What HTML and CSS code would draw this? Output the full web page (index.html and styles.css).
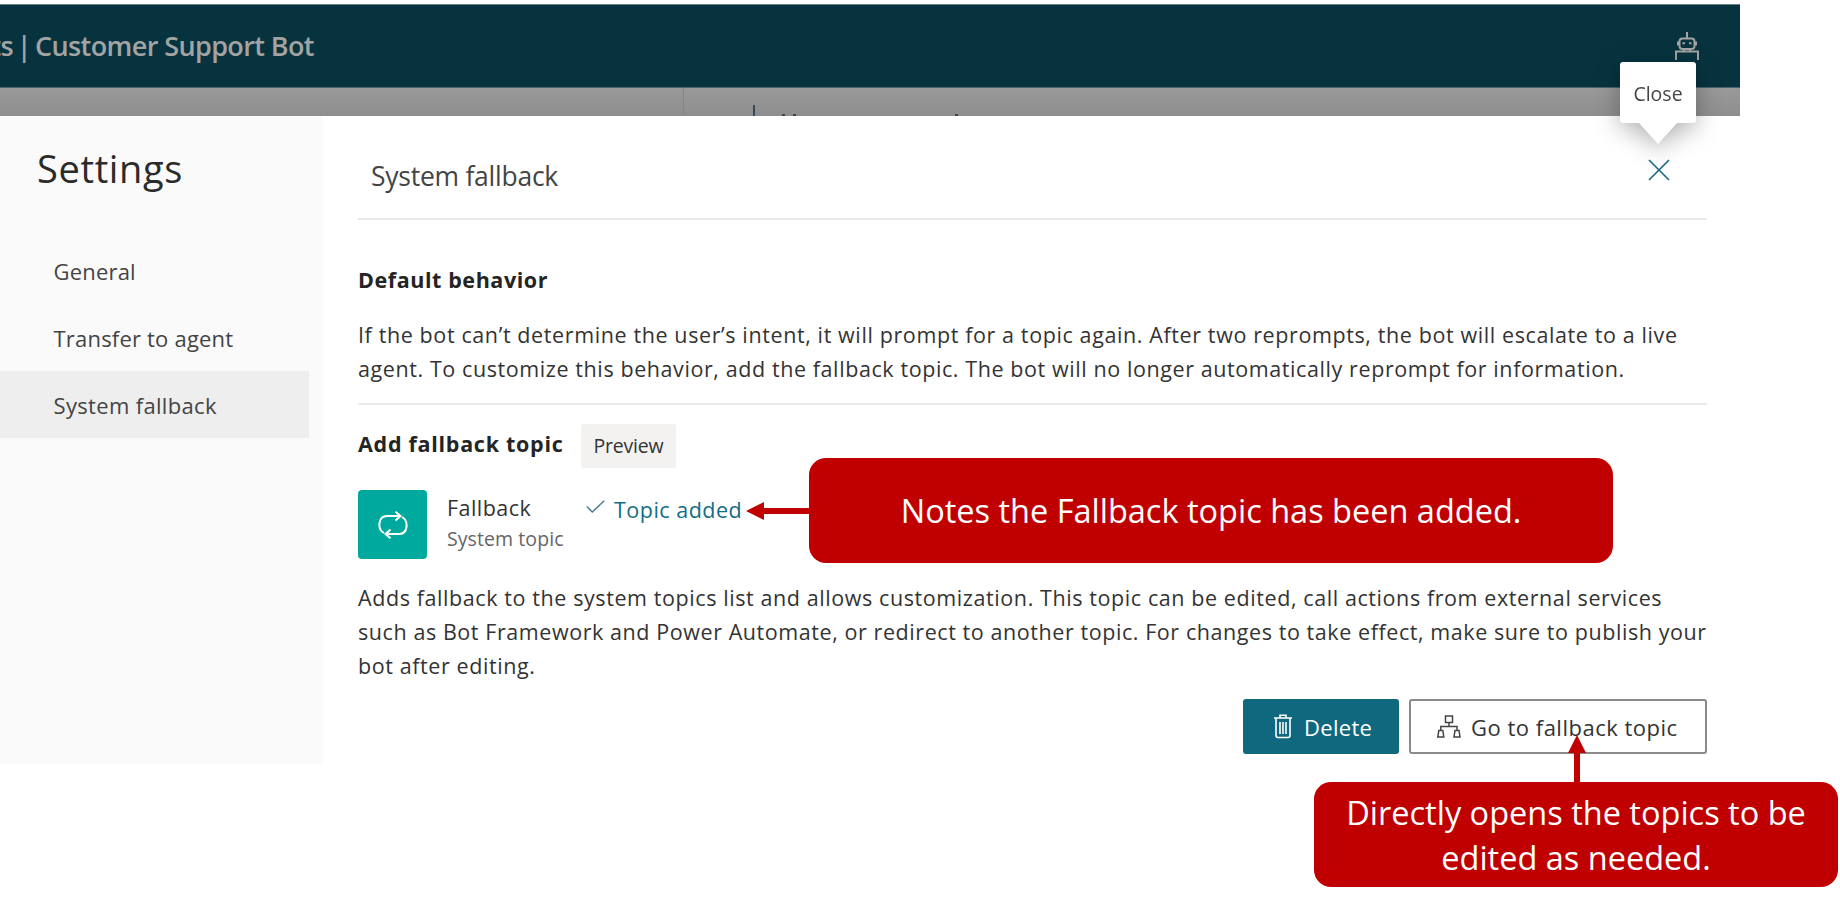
FILE: index.html
```
<!DOCTYPE html>
<html lang="en">
<head>
<meta charset="utf-8">
<title>Settings</title>
<link rel="stylesheet" href="styles.css">
</head>
<body>
<div class="page">
  <header class="topbar">
    <h1 class="app-title"><span class="cut"><span class="t">ts</span></span><span class="bar t">|</span><span class="t name">Customer Support Bot</span></h1>
    <svg class="bot" viewBox="0 0 24 28"><path d="M12 0v6M1 28v-8.500h22V28M9 19.500v-2M15 19.500v-2"/><rect x="4.500" y="6.500" width="15" height="10.500" rx="3"/><path d="M3 9.500v4M21 9.500v4"/><path d="M7.500 11.300h2.500M14 11.300h2.500"/></svg>
  </header>
  <div class="backdrop"><i class="divider"></i><i class="caret"></i><i class="speck a"></i><i class="speck b"></i><i class="speck c"></i></div>
  <div class="panel">
    <nav class="sidebar">
      <h2 class="side-title"><span class="t">Settings</span></h2>
      <a class="item"><span class="t g1">General</span></a>
      <a class="item"><span class="t g2">Transfer to agent</span></a>
      <a class="item active"><span class="t g3">System fallback</span></a>
    </nav>
    <main class="content">
      <div class="head">
        <h3 class="head-title"><span class="t">System fallback</span></h3>
        <svg class="close" viewBox="0 0 22 22"><path d="M1 1l20 20M21 1L1 21"/></svg>
      </div>
      <h4 class="section"><span class="t s1">Default behavior</span></h4>
      <p class="para"><span class="t p1">If the bot can’t determine the user’s intent, it will prompt for a topic again. After two reprompts, the bot will escalate to a live</span><span class="t p2">agent. To customize this behavior, add the fallback topic. The bot will no longer automatically reprompt for information.</span></p>
      <div class="add-row">
        <h4 class="section add"><span class="t s2">Add fallback topic</span></h4>
        <span class="badge"><span class="t">Preview</span></span>
      </div>
      <div class="topic">
        <div class="tile"><svg viewBox="0 0 30 28"><path d="M6 22C-1 18 0 5 9 5h12M17.500 .8L22.500 5l-5 4.500M24 6c7 4 6 17-3 17H8M12.500 18.500L7.500 23l5 4.300"/></svg></div>
        <div class="names"><span class="t n1">Fallback</span><span class="t n2">System topic</span></div>
        <svg class="check" viewBox="0 0 19 13"><path d="M.8 6.500l5.500 5.500L18.200.8"/></svg>
        <span class="added"><span class="t">Topic added</span></span>
      </div>
      <p class="para second"><span class="t p3">Adds fallback to the system topics list and allows customization. This topic can be edited, call actions from external services</span><span class="t p4">such as Bot Framework and Power Automate, or redirect to another topic. For changes to take effect, make sure to publish your</span><span class="t p5">bot after editing.</span></p>
      <div class="actions">
        <button class="btn primary"><svg class="trash" viewBox="0 0 20 25"><path d="M1 4h18M7 4V1.300h6V4M3 4v17.500q0 2 2 2h10q2 0 2-2V4M7 8v12M10 8v12M13 8v12"/></svg><span class="t b1">Delete</span></button>
        <button class="btn"><svg class="tree" viewBox="0 0 24 23"><path d="M8.500 1h7v6.500h-7zM1.800 15.500h4l1 6.500h-6zM18 15.500h4l1 6.500h-6zM12 7.500v4M3.800 15.500v-4H20v4"/></svg><span class="t b2">Go to fallback topic</span></button>
      </div>
    </main>
  </div>
  <div class="tooltip"><span class="t">Close</span></div>
  <div class="callout one"><span class="t c1">Notes the Fallback topic has been added.</span></div>
  <svg class="arrow left" viewBox="0 0 64 18"><path d="M0 9L18 0v6h46v6H18v6z"/></svg>
  <div class="callout two"><span class="t c2">Directly opens the topics to be</span><span class="t c3">edited as needed.</span></div>
  <svg class="arrow up" viewBox="0 0 18 48"><path d="M9 0l9 18h-6v30H6V18H0z"/></svg>
</div>
</body>
</html>
```
FILE: styles.css
```
* { box-sizing: border-box; }
body { margin: 0; background: #fff; font-family: "Open Sans", "Noto Sans", sans-serif; color: #333; }
h1, h2, h3, h4, p { margin: 0; font-weight: 400; }
svg { display: block; fill: none; }
.t { white-space: nowrap; }
.page { position: relative; width: 1840px; height: 903px; overflow: hidden; padding-top: 4px; }

.topbar { width: 1740px; height: 84px; background: #07333f; border-top: 1px solid #6b7f87; border-bottom: 1px solid #48636c; display: flex; justify-content: space-between; padding-right: 41px; }
.app-title { display: flex; font-size: 27px; line-height: 82px; font-weight: 650; color: #a3a3a3; letter-spacing: -.6px; }
.cut { width: 13px; overflow: hidden; display: flex; justify-content: flex-end; }
.bar { width: 22px; text-align: center; }
.bot { width: 24px; height: 28px; margin-top: 27px; stroke: #a3a3a3; stroke-width: 2; }

.backdrop { width: 1740px; height: 28px; background: linear-gradient(#999, #8e8e8e); position: relative; }
.backdrop i { position: absolute; bottom: 0; background: #444; }
.backdrop .divider { left: 683px; width: 1px; height: 28px; background: #858585; }
.backdrop .caret { left: 753px; width: 2px; height: 11px; background: #34495c; }
.backdrop .speck { width: 3px; height: 2px; }
.a { left: 782px; } .b { left: 793px; } .c { left: 955px; }

.panel { display: flex; height: 648px; width: 1740px; }
.sidebar { width: 323px; background: #fafafa; }
.side-title { font-size: 38px; letter-spacing: .65px; line-height: 60px; padding: 22px 0 0 37px; height: 121px; color: #2b2b2b; }
.item { display: block; height: 67px; width: 309px; padding-left: 53.500px; font-size: 22px; line-height: 68px; color: #444; letter-spacing: .2px; }
.g3 { letter-spacing: .33px; }
.active { background: #eee; }

.content { width: 1417px; padding: 0 33px 0 35px; }
.head { display: flex; justify-content: space-between; height: 104px; border-bottom: 2px solid #e9e9e9; padding: 38px 37px 0 13px; }
.head-title { font-size: 26.500px; letter-spacing: -.25px; line-height: 44px; color: #444; }
.close { width: 22px; height: 22px; margin-top: 5px; stroke: #1c6a86; stroke-width: 1.700; }
.section { font-size: 21.500px; line-height: 34px; font-weight: 700; color: #242424; padding-top: 43px; height: 98px; letter-spacing: .58px; }
.para { font-size: 21.500px; line-height: 34.300px; height: 87px; border-bottom: 2px solid #e9e9e9; letter-spacing: .59px; }
.para .t { display: block; width: max-content; }
.p1 { letter-spacing: .61px; }
.p4 { letter-spacing: .575px; }
.add-row { display: flex; gap: 17px; padding-top: 19px; height: 85px; }
.section.add { padding-top: 3px; height: auto; width: 206px; letter-spacing: .72px; }
.badge { height: 44px; width: 95px; background: #f3f2f1; border-radius: 3px; font-size: 19.500px; line-height: 43px; text-align: center; letter-spacing: -.2px; }
.topic { display: flex; height: 90.500px; }
.tile { width: 69px; height: 69px; border-radius: 4px; background: #00a99d; display: flex; align-items: center; justify-content: center; }
.tile svg { width: 30px; height: 28px; stroke: #fff; stroke-width: 2; }
.names { width: 137px; padding: 1px 0 0 20px; display: flex; flex-direction: column; font-size: 21.500px; line-height: 34px; letter-spacing: .45px; }
.n2 { font-size: 19.500px; line-height: 28px; color: #666; letter-spacing: .08px; }
.check { width: 19px; height: 13px; margin: 10px 9px 0 22px; stroke: #4a7f90; stroke-width: 1.500; }
.added { font-size: 21.500px; line-height: 40px; color: #136d86; letter-spacing: .5px; }
.second { border: 0; height: 118.500px; }
.actions { display: flex; justify-content: flex-end; gap: 10px; }
.btn { height: 55px; border: 2px solid #8a8a8a; border-radius: 3px; background: #fff; font: 22px "Open Sans", sans-serif; letter-spacing: .5px; color: #333; width: 298px; padding: 0 0 0 26px; display: flex; align-items: center; }
.primary { width: 156px; background: #0f687d; border-color: #0f687d; color: #fff; padding-left: 28px; letter-spacing: .3px; }
.trash { width: 20px; height: 25px; stroke: #fff; stroke-width: 1.600; margin-right: 11px; }
.tree { width: 24px; height: 23px; stroke: #444; stroke-width: 1.500; margin-right: 10px; }

.tooltip { position: absolute; left: 1620px; top: 62px; width: 76px; height: 61px; background: #fff; border-radius: 3px; text-align: center; font-size: 19.500px; line-height: 64px; color: #444; filter: drop-shadow(0 6px 12px rgba(0,0,0,.3)); }
.tooltip::after { content: ""; position: absolute; left: 19px; top: 61px; border: 19.500px solid transparent; border-top: 21.500px solid #fff; border-bottom: 0; }

.callout { position: absolute; background: #c00000; color: #fff; border-radius: 17px; font-size: 32.500px; font-weight: 450; line-height: 45px; height: 105px; display: flex; flex-direction: column; align-items: center; justify-content: center; }
.one { left: 809px; top: 458px; width: 804px; }
.two { left: 1314px; top: 782px; width: 524px; }
.arrow { position: absolute; fill: #c00000; }
.left { left: 746px; top: 502px; width: 64px; height: 18px; }
.up { left: 1568px; top: 735px; width: 18px; height: 48px; }
```
